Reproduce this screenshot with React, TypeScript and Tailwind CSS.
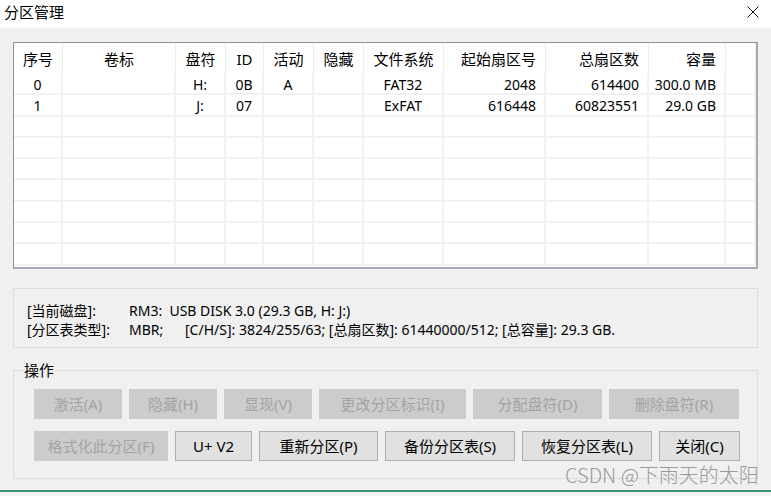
import * as React from "react";

type Col = { title: string; width: string; align: "center" | "right" };

const cols: Col[] = [
    {title: "序号", width: "w-[49px]", align: "center"},
    {title: "卷标", width: "w-[113px]", align: "center"},
    {title: "盘符", width: "w-[50px]", align: "center"},
    {title: "ID", width: "w-[38px]", align: "center"},
    {title: "活动", width: "w-[50px]", align: "center"},
    {title: "隐藏", width: "w-[50px]", align: "center"},
    {title: "文件系统", width: "w-[80px]", align: "center"},
    {title: "起始扇区号", width: "w-[102px]", align: "right"},
    {title: "总扇区数", width: "w-[103px]", align: "right"},
    {title: "容量", width: "w-[77px]", align: "right"},
    {title: "", width: "flex-1", align: "center"},
];

const rows: string[][] = [
    ["0", "", "H:", "0B", "A", "", "FAT32", "2048", "614400", "300.0 MB", ""],
    ["1", "", "J:", "07", "", "", "ExFAT", "616448", "60823551", "29.0 GB", ""],
    ["", "", "", "", "", "", "", "", "", "", ""],
    ["", "", "", "", "", "", "", "", "", "", ""],
    ["", "", "", "", "", "", "", "", "", "", ""],
    ["", "", "", "", "", "", "", "", "", "", ""],
    ["", "", "", "", "", "", "", "", "", "", ""],
    ["", "", "", "", "", "", "", "", "", "", ""],
    ["", "", "", "", "", "", "", "", "", "", ""],
];

function Btn({label, width, disabled = false}: {label: string; width: string; disabled?: boolean}) {
    return (
        <div
            className={`${width} h-[30px] flex items-center justify-center text-[15px] leading-none ${
                disabled
                    ? "bg-[#cccccc] text-[#a3a3a3] border border-[#cccccc]"
                    : "bg-[#e1e1e1] text-black border border-[#adadad]"
            }`}
        >
            {label}
        </div>
    );
}

function PartitionTable() {
    return (
        <div className="mx-[13px] mt-[14px] h-[227px] bg-white border border-[#8f8fa0] border-r-2 border-b-2 border-r-[#a8a8b4] border-b-[#a8a8b4] flex flex-col">
            <div className="flex h-[31px] shrink-0">
                {cols.map((c, i) => (
                    <div
                        key={i}
                        className={`${c.width} h-full flex items-center pt-[2px] border-r border-[#ececec] text-[15px] leading-none ${
                            c.align === "right" ? "justify-end pr-[9px]" : "justify-center"
                        }`}
                    >
                        {c.title}
                    </div>
                ))}
            </div>
            {rows.map((r, ri) => (
                <div key={ri} className="flex h-[21.3px] shrink-0">
                    {r.map((v, ci) => (
                        <div
                            key={ci}
                            className={`${cols[ci].width} h-full flex items-center pt-[3px] border-r-2 border-b-2 border-[#f2f2f2] text-[14px] leading-none ${
                                cols[ci].align === "right" ? "justify-end pr-[8px]" : "justify-center"
                            }`}
                        >
                            {v}
                        </div>
                    ))}
                </div>
            ))}
        </div>
    );
}

export default function App() {
    return (
        <div
            className="w-[771px] h-[496px] bg-[#f0f0f0] relative overflow-hidden text-black flex flex-col"
            style={{fontFamily: '"Noto Sans", "Noto Sans CJK SC", sans-serif'}}
        >
            <div className="h-[28px] bg-white flex items-center justify-between pl-[4px] pr-[12px] shrink-0">
                <span className="text-[15px] leading-none -mt-[4px]">分区管理</span>
                <svg width="12" height="12" viewBox="0 0 12 12" className="-mt-[5px]">
                    <path d="M0.5 0.5 L11.5 11.5 M11.5 0.5 L0.5 11.5" stroke="#111" strokeWidth="1"/>
                </svg>
            </div>

            <PartitionTable/>

            <div className="mx-[13px] mt-[19px] h-[60px] border border-[#dcdcdc] pl-[13px] pt-[13px] text-[14px] leading-[18.6px] shrink-0">
                <div className="flex">
                    <span className="w-[102px]">[当前磁盘]:</span>
                    <span>RM3:&nbsp; USB DISK 3.0 (29.3 GB, H: J:)</span>
                </div>
                <div className="flex">
                    <span className="w-[102px]">[分区表类型]:</span>
                    <span className="w-[56px]">MBR;</span>
                    <span>[C/H/S]: 3824/255/63; [总扇区数]: 61440000/512; [总容量]: 29.3 GB.</span>
                </div>
            </div>

            <fieldset className="mx-[13px] mt-[13px] h-[118px] border border-[#dcdcdc] pl-[20px] pt-[10px] shrink-0">
                <legend className="-ml-[11px] px-[1px] text-[15px] leading-[18px]">操作</legend>
                <div className="flex gap-[7px]">
                    <Btn label="激活(A)" width="w-[88px]" disabled/>
                    <Btn label="隐藏(H)" width="w-[88px]" disabled/>
                    <Btn label="显现(V)" width="w-[88px]" disabled/>
                    <Btn label="更改分区标识(I)" width="w-[147px]" disabled/>
                    <Btn label="分配盘符(D)" width="w-[129px]" disabled/>
                    <Btn label="删除盘符(R)" width="w-[130px]" disabled/>
                </div>
                <div className="flex gap-[7px] mt-[12px]">
                    <Btn label="格式化此分区(F)" width="w-[134px]" disabled/>
                    <Btn label="U+ V2" width="w-[77px]"/>
                    <Btn label="重新分区(P)" width="w-[119px]"/>
                    <Btn label="备份分区表(S)" width="w-[130px]"/>
                    <Btn label="恢复分区表(L)" width="w-[130px]"/>
                    <Btn label="关闭(C)" width="w-[81px]"/>
                </div>
            </fieldset>

            <div className="mt-auto h-[2px] bg-[#3f9274] shrink-0"/>
            <div className="h-[4px] bg-[#f3f3f3] shrink-0"/>

            <span
                className="absolute left-[565px] top-[465px] text-[20px] leading-none font-light text-[#9a9a9a]"
                style={{fontFamily: '"Noto Sans CJK SC", sans-serif'}}
            >
                CSDN @下雨天的太阳
            </span>
        </div>
    );
}
